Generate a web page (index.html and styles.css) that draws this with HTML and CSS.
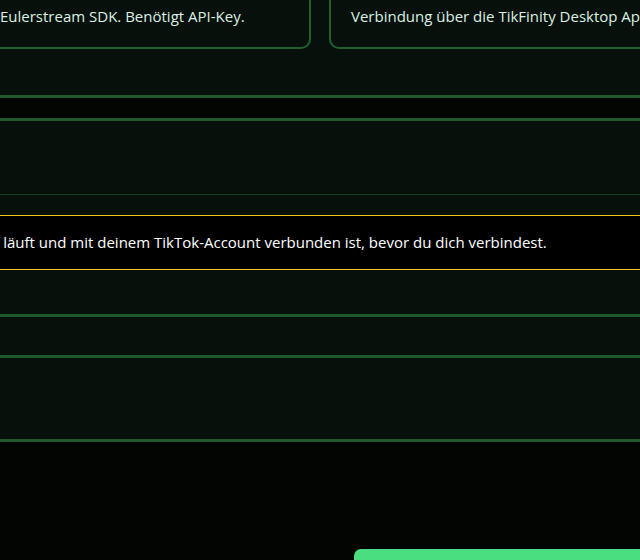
FILE: index.html
```html
<!DOCTYPE html>
<html lang="de">
<head>
<meta charset="utf-8">
<title>Verbindung</title>
<link rel="stylesheet" href="styles.css">
</head>
<body>
<div class="page">
  <section class="modes">
    <div class="mode-grid">
      <div class="mode-card">
        <p class="mode-desc">Direkt über TikTok Live.</p>
      </div>
      <div class="mode-card">
        <p class="mode-desc">Eulerstream SDK. Benötigt API-Key.</p>
      </div>
      <div class="mode-card">
        <p class="mode-desc">Verbindung über die TikFinity Desktop App.</p>
      </div>
    </div>
  </section>

  <section class="panel">
    <div class="panel-head"></div>
    <div class="panel-body">
      <div class="alert">
        <span class="alert-text">Stelle sicher, dass die TikFinity Desktop App läuft und mit deinem TikTok-Account verbunden ist, bevor du dich verbindest.</span>
      </div>
    </div>
    <div class="panel-row panel-row-short"></div>
    <div class="panel-row panel-row-tall"></div>
  </section>

  <footer class="actions">
    <button class="btn-primary" type="button">Verbinden</button>
  </footer>
</div>
</body>
</html>
```
FILE: styles.css
```css
html, body {
  margin: 0;
  padding: 0;
}

body {
  background: #020502;
  overflow: hidden;
  font-family: "Open Sans", "Noto Sans", sans-serif;
  font-size: 15px;
  color: #dcefe3;
}

.page {
  width: 1100px;
  margin: -37px 0 0 -397px;
}

/* connection mode cards */
.modes {
  background: #07100a;
  border-bottom: 3px solid #1f5a2c;
  padding: 20px 24px 46px;
}

.mode-grid {
  display: grid;
  grid-template-columns: repeat(3, 333px);
  gap: 18px;
}

.mode-card {
  border: 2px solid #21602f;
  border-radius: 10px;
  padding: 20px;
}

.mode-desc {
  margin: 0;
  line-height: 22px;
  white-space: nowrap;
}

/* settings panel */
.panel {
  margin-top: 20px;
  background: #07100a;
  border-top: 3px solid #1f5a2c;
}

.panel-head {
  height: 73px;
  border-bottom: 1px solid #15401f;
}

.panel-body {
  padding: 20px 0 44px;
  border-bottom: 3px solid #1f5a2c;
}

.alert {
  background: #000000;
  border-top: 1px solid #f2c318;
  border-bottom: 1px solid #f2c318;
  padding: 15px 0 15px 93px;
  color: #ffffff;
  line-height: 23px;
  white-space: nowrap;
}

.panel-row {
  border-bottom: 3px solid #1f5a2c;
}

.panel-row-short {
  height: 38px;
}

.panel-row-tall {
  height: 81px;
}

/* footer actions */
.actions {
  display: flex;
  justify-content: flex-end;
  padding: 107px 24px 0;
}

.btn-primary {
  width: 325px;
  height: 44px;
  border: none;
  border-radius: 7px;
  background: #4ade80;
  color: #04210f;
  font-family: inherit;
  font-size: 15px;
  font-weight: 600;
}
```
